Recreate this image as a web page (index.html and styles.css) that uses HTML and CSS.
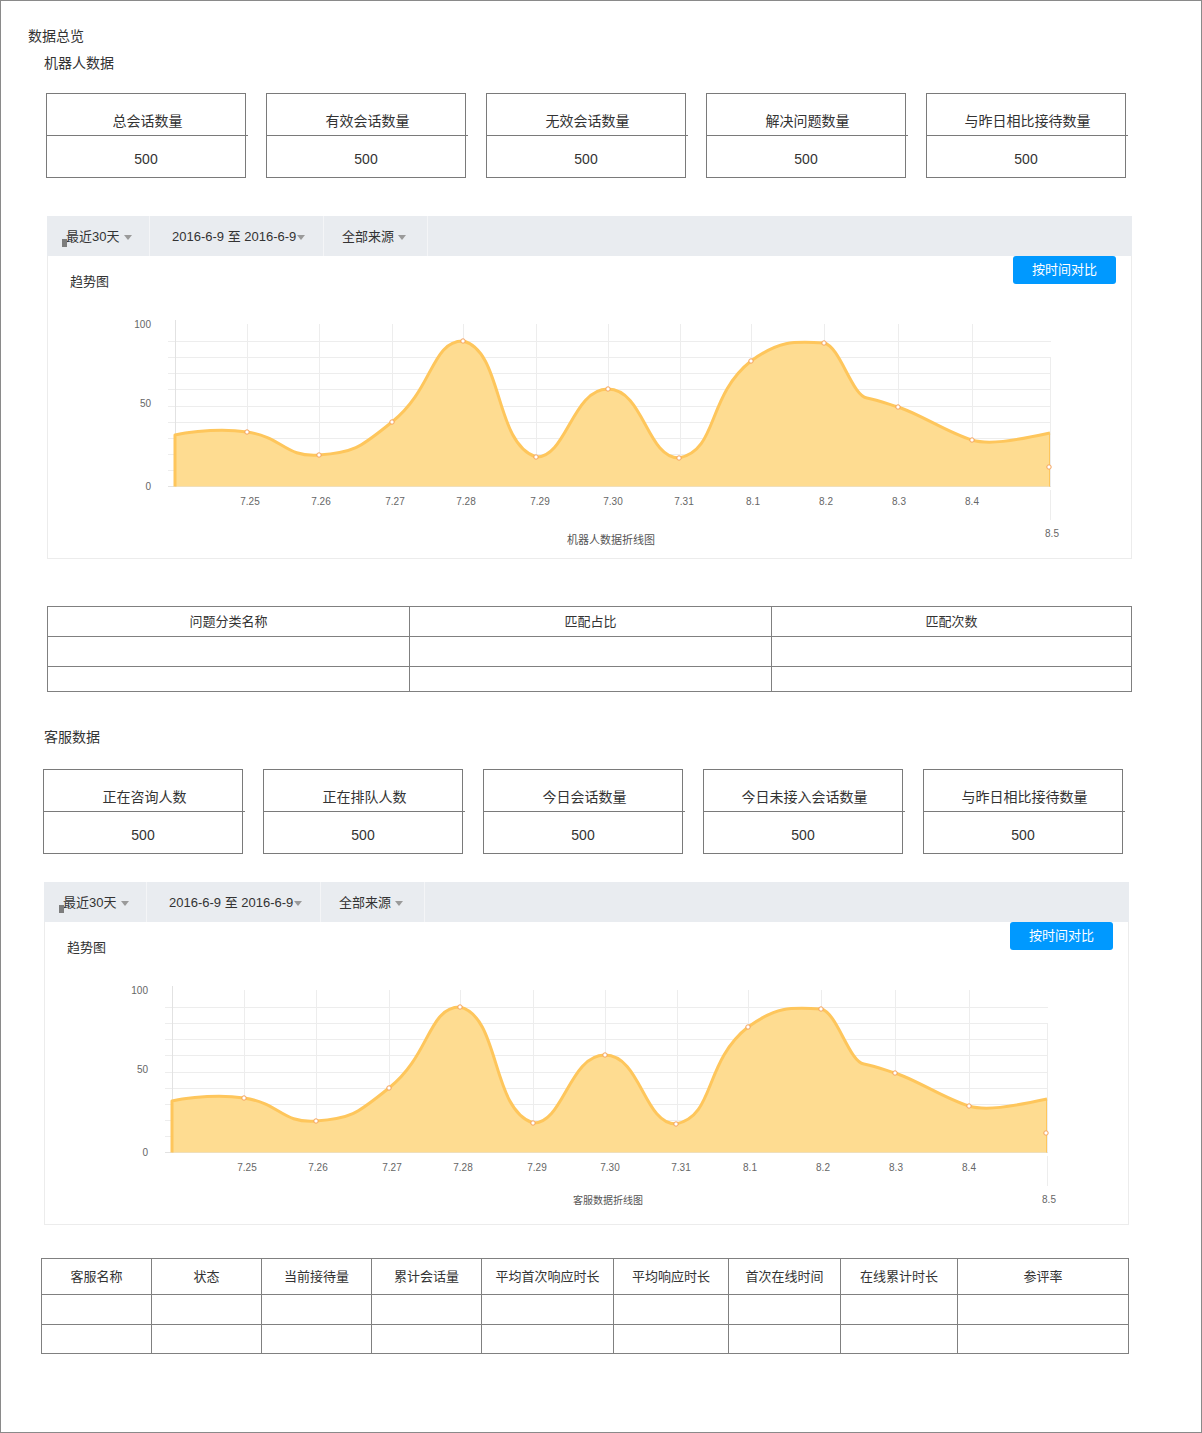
FILE: index.html
```html
<!DOCTYPE html>
<html lang="zh-CN">
<head>
<meta charset="utf-8">
<title>数据总览</title>
<link rel="stylesheet" href="styles.css">
</head>
<body>
<div class="page">
  <h1 class="page-title">数据总览</h1>

  <h2 class="section-title">机器人数据</h2>
  <div class="cards">
    <div class="card"><div class="card-label">总会话数量</div><div class="card-value">500</div></div>
    <div class="card"><div class="card-label">有效会话数量</div><div class="card-value">500</div></div>
    <div class="card"><div class="card-label">无效会话数量</div><div class="card-value">500</div></div>
    <div class="card"><div class="card-label">解决问题数量</div><div class="card-value">500</div></div>
    <div class="card"><div class="card-label">与昨日相比接待数量</div><div class="card-value">500</div></div>
  </div>

  <div class="panel">
    <div class="filter-bar">
      <div class="filter-item filter-item--range"><span class="cursor-mark"></span>最近30天<span class="caret caret--wide"></span></div>
      <div class="filter-item filter-item--date">2016-6-9 至 2016-6-9<span class="caret caret--tight"></span></div>
      <div class="filter-item filter-item--source">全部来源<span class="caret"></span></div>
    </div>
    <div class="panel-head">
      <span class="trend-label">趋势图</span>
      <button class="btn-compare" type="button">按时间对比</button>
    </div>
    <svg class="chart" viewBox="0 0 1083 268" width="1083" height="268">
      <path class="grid" d="M120 51.5H1003M120 67.5H1003M120 83.5H1003M120 99.5H1003M120 116.5H1003M120 132.5H1003M120 148.5H1003M120 164.5H1003M120 180.5H1003"/>
      <path class="grid" d="M199.5 34V197M271.5 34V197M344.5 34V197M415.5 34V197M488.5 34V197M560.5 34V197M632.5 34V197M703.5 34V197M776.5 34V197M850.5 34V197M924.5 34V197M1002.5 67V197M1002.5 200V230"/>
      <path class="axis" d="M127.5 30V197M120 196.5H1003"/>
      <path class="area" d="M127,196.5 L127,145 C127,145 163.9,136.9 199,142 C235.9,147.4 235.8,167.4 271,165 C308.3,162.4 313.3,156.3 344,132 C385.3,99.3 383.3,51 415,51 C455.3,60.8 445.9,153.1 488,167 C518.4,168 524.3,98.8 560,99 C595.8,99.3 598.8,168 631,168 C670.3,160.3 658.3,106.4 703,71 C730.8,51 744.1,51 776,53 C792,56 804,106 819,108 C830,110 840,114 850,117 C872,124 900,143 924,150 C940,155 965,151 1002,143 L1002,196.5 Z"/>
      <path class="line" d="M127,196.5 L127,145 C127,145 163.9,136.9 199,142 C235.9,147.4 235.8,167.4 271,165 C308.3,162.4 313.3,156.3 344,132 C385.3,99.3 383.3,51 415,51 C455.3,60.8 445.9,153.1 488,167 C518.4,168 524.3,98.8 560,99 C595.8,99.3 598.8,168 631,168 C670.3,160.3 658.3,106.4 703,71 C730.8,51 744.1,51 776,53 C792,56 804,106 819,108 C830,110 840,114 850,117 C872,124 900,143 924,150 C940,155 965,151 1002,143"/>
      <path class="line-edge" d="M1001.5 143V196.5"/>
      <g class="dots">
        <circle cx="199" cy="142" r="2.2"/><circle cx="271" cy="165" r="2.2"/><circle cx="344" cy="132" r="2.2"/>
        <circle cx="415" cy="51" r="2.2"/><circle cx="488" cy="167" r="2.2"/><circle cx="560" cy="99" r="2.2"/>
        <circle cx="631" cy="168" r="2.2"/><circle cx="703" cy="71" r="2.2"/><circle cx="776" cy="53" r="2.2"/>
        <circle cx="850" cy="117" r="2.2"/><circle cx="924" cy="150" r="2.2"/><circle cx="1001" cy="177" r="2.2"/>
      </g>
      <g class="ylabels">
        <text x="103" y="38">100</text><text x="103" y="117">50</text><text x="103" y="200">0</text>
      </g>
      <g class="xlabels">
        <text x="202" y="215">7.25</text><text x="273" y="215">7.26</text><text x="347" y="215">7.27</text>
        <text x="418" y="215">7.28</text><text x="492" y="215">7.29</text><text x="565" y="215">7.30</text>
        <text x="636" y="215">7.31</text><text x="705" y="215">8.1</text><text x="778" y="215">8.2</text>
        <text x="851" y="215">8.3</text><text x="924" y="215">8.4</text><text x="1004" y="247">8.5</text>
      </g>
      <text class="caption" x="563" y="254">机器人数据折线图</text>
    </svg>
  </div>

  <table class="data-table data-table--robot">
    <colgroup><col class="c-362"><col class="c-362"><col class="c-360"></colgroup>
    <tr class="row-h30"><th>问题分类名称</th><th>匹配占比</th><th>匹配次数</th></tr>
    <tr class="row-h30"><td></td><td></td><td></td></tr>
    <tr class="row-h25"><td></td><td></td><td></td></tr>
  </table>

  <h2 class="section-title section-title--service">客服数据</h2>
  <div class="cards cards--service">
    <div class="card"><div class="card-label">正在咨询人数</div><div class="card-value">500</div></div>
    <div class="card"><div class="card-label">正在排队人数</div><div class="card-value">500</div></div>
    <div class="card"><div class="card-label">今日会话数量</div><div class="card-value">500</div></div>
    <div class="card"><div class="card-label">今日未接入会话数量</div><div class="card-value">500</div></div>
    <div class="card"><div class="card-label">与昨日相比接待数量</div><div class="card-value">500</div></div>
  </div>

  <div class="panel panel--service">
    <div class="filter-bar">
      <div class="filter-item filter-item--range"><span class="cursor-mark"></span>最近30天<span class="caret caret--wide"></span></div>
      <div class="filter-item filter-item--date">2016-6-9 至 2016-6-9<span class="caret caret--tight"></span></div>
      <div class="filter-item filter-item--source">全部来源<span class="caret"></span></div>
    </div>
    <div class="panel-head">
      <span class="trend-label">趋势图</span>
      <button class="btn-compare" type="button">按时间对比</button>
    </div>
    <svg class="chart" viewBox="0 0 1083 268" width="1083" height="268">
      <path class="grid" d="M120 51.5H1003M120 67.5H1003M120 83.5H1003M120 99.5H1003M120 116.5H1003M120 132.5H1003M120 148.5H1003M120 164.5H1003M120 180.5H1003"/>
      <path class="grid" d="M199.5 34V197M271.5 34V197M344.5 34V197M415.5 34V197M488.5 34V197M560.5 34V197M632.5 34V197M703.5 34V197M776.5 34V197M850.5 34V197M924.5 34V197M1002.5 67V197M1002.5 200V230"/>
      <path class="axis" d="M127.5 30V197M120 196.5H1003"/>
      <path class="area" d="M127,196.5 L127,145 C127,145 163.9,136.9 199,142 C235.9,147.4 235.8,167.4 271,165 C308.3,162.4 313.3,156.3 344,132 C385.3,99.3 383.3,51 415,51 C455.3,60.8 445.9,153.1 488,167 C518.4,168 524.3,98.8 560,99 C595.8,99.3 598.8,168 631,168 C670.3,160.3 658.3,106.4 703,71 C730.8,51 744.1,51 776,53 C792,56 804,106 819,108 C830,110 840,114 850,117 C872,124 900,143 924,150 C940,155 965,151 1002,143 L1002,196.5 Z"/>
      <path class="line" d="M127,196.5 L127,145 C127,145 163.9,136.9 199,142 C235.9,147.4 235.8,167.4 271,165 C308.3,162.4 313.3,156.3 344,132 C385.3,99.3 383.3,51 415,51 C455.3,60.8 445.9,153.1 488,167 C518.4,168 524.3,98.8 560,99 C595.8,99.3 598.8,168 631,168 C670.3,160.3 658.3,106.4 703,71 C730.8,51 744.1,51 776,53 C792,56 804,106 819,108 C830,110 840,114 850,117 C872,124 900,143 924,150 C940,155 965,151 1002,143"/>
      <path class="line-edge" d="M1001.5 143V196.5"/>
      <g class="dots">
        <circle cx="199" cy="142" r="2.2"/><circle cx="271" cy="165" r="2.2"/><circle cx="344" cy="132" r="2.2"/>
        <circle cx="415" cy="51" r="2.2"/><circle cx="488" cy="167" r="2.2"/><circle cx="560" cy="99" r="2.2"/>
        <circle cx="631" cy="168" r="2.2"/><circle cx="703" cy="71" r="2.2"/><circle cx="776" cy="53" r="2.2"/>
        <circle cx="850" cy="117" r="2.2"/><circle cx="924" cy="150" r="2.2"/><circle cx="1001" cy="177" r="2.2"/>
      </g>
      <g class="ylabels">
        <text x="103" y="38">100</text><text x="103" y="117">50</text><text x="103" y="200">0</text>
      </g>
      <g class="xlabels">
        <text x="202" y="215">7.25</text><text x="273" y="215">7.26</text><text x="347" y="215">7.27</text>
        <text x="418" y="215">7.28</text><text x="492" y="215">7.29</text><text x="565" y="215">7.30</text>
        <text x="636" y="215">7.31</text><text x="705" y="215">8.1</text><text x="778" y="215">8.2</text>
        <text x="851" y="215">8.3</text><text x="924" y="215">8.4</text><text x="1004" y="247">8.5</text>
      </g>
      <text class="caption caption--small" x="563" y="248">客服数据折线图</text>
    </svg>
  </div>

  <table class="data-table data-table--service">
    <colgroup>
      <col class="c-110"><col class="c-110"><col class="c-110"><col class="c-110"><col class="c-132">
      <col class="c-115"><col class="c-112"><col class="c-117"><col class="c-171">
    </colgroup>
    <tr class="row-h36"><th>客服名称</th><th>状态</th><th>当前接待量</th><th>累计会话量</th><th>平均首次响应时长</th><th>平均响应时长</th><th>首次在线时间</th><th>在线累计时长</th><th>参评率</th></tr>
    <tr class="row-h30"><td></td><td></td><td></td><td></td><td></td><td></td><td></td><td></td><td></td></tr>
    <tr class="row-h29"><td></td><td></td><td></td><td></td><td></td><td></td><td></td><td></td><td></td></tr>
  </table>
</div>
</body>
</html>
```

FILE: styles.css
```css
* { box-sizing: border-box; }

body {
  margin: 0;
  background: #fff;
  color: #333;
  font-family: "Liberation Sans", "Noto Sans CJK SC", sans-serif;
}

.page {
  width: 1202px;
  height: 1433px;
  border: 1px solid #8a8a8a;
  padding-top: 25px;
}

.page-title {
  margin: 0 0 0 27px;
  font-size: 14px;
  line-height: 20px;
  font-weight: normal;
}

.section-title {
  margin: 7px 0 0 43px;
  font-size: 14px;
  line-height: 20px;
  font-weight: normal;
}
.section-title--service { margin-top: 35px; }

/* stat cards */
.cards {
  display: flex;
  gap: 20px;
  margin: 20px 0 0 45px;
}
.cards--service { margin: 22px 0 0 42px; }

.card {
  width: 200px;
  height: 85px;
  border: 1px solid #7a7a7a;
}
.card-label {
  height: 42px;
  margin-right: -3px;
  padding-top: 17px;
  border-bottom: 1px solid #7a7a7a;
  text-align: center;
  font-size: 14px;
  line-height: 20px;
}
.card-value {
  padding-top: 13px;
  text-align: center;
  font-size: 14px;
  line-height: 20px;
}

/* chart panel */
.panel {
  width: 1085px;
  margin: 38px 0 0 46px;
  border: 1px solid #ececec;
  border-top: 0;
}
.panel--service { margin: 28px 0 0 43px; }

.filter-bar {
  display: flex;
  height: 40px;
  margin: 0 -1px;
  background: #e9ecf0;
}
.filter-item {
  position: relative;
  height: 40px;
  line-height: 42px;
  font-size: 13px;
  color: #333;
  border-right: 1px solid #f4f5f7;
  white-space: nowrap;
}
.filter-item--range { width: 103px; padding-left: 19px; }
.filter-item--date { width: 174px; padding-left: 22px; }
.filter-item--source { width: 104px; padding-left: 18px; }

.cursor-mark {
  position: absolute;
  left: 15px;
  top: 23px;
  width: 5px;
  height: 8px;
  background: #7d7d7d;
}

.caret {
  display: inline-block;
  width: 0;
  height: 0;
  margin-left: 4px;
  vertical-align: middle;
  border-left: 4.5px solid transparent;
  border-right: 4.5px solid transparent;
  border-top: 5px solid #9a9a9a;
}
.caret--wide { margin-left: 5px; }
.caret--tight { margin-left: 1px; }

.panel-head {
  display: flex;
  justify-content: space-between;
  align-items: flex-start;
  height: 34px;
  padding-left: 22px;
}
.trend-label {
  margin-top: 16px;
  font-size: 13px;
  line-height: 20px;
}
.btn-compare {
  width: 103px;
  height: 28px;
  margin-right: 15px;
  padding: 0;
  border: 0;
  border-radius: 3px;
  background: #0099ff;
  color: #fff;
  font-family: inherit;
  font-size: 13px;
  line-height: 28px;
}

.chart {
  display: block;
  width: 1083px;
  height: 268px;
}
.chart .grid { fill: none; stroke: #ededed; stroke-width: 1; }
.chart .axis { fill: none; stroke: #e2e2e2; stroke-width: 1; }
.chart .area { fill: #fedc91; stroke: none; }
.chart .line { fill: none; stroke: #fec65c; stroke-width: 3; stroke-linejoin: round; }
.chart .line-edge { fill: none; stroke: #fec65c; stroke-width: 1; }
.chart .dots circle { fill: #fff; stroke: #f6a25a; stroke-width: 1; }
.chart text {
  font-family: "Liberation Sans", "Noto Sans CJK SC", sans-serif;
  font-size: 10px;
  fill: #666;
}
.chart .ylabels text { text-anchor: end; }
.chart .xlabels text { text-anchor: middle; }
.chart .caption { text-anchor: middle; font-size: 11px; fill: #555; }
.chart .caption--small { font-size: 10px; }

/* tables */
.data-table {
  border-collapse: collapse;
  table-layout: fixed;
  font-size: 13px;
  color: #333;
}
.data-table th,
.data-table td {
  padding: 0;
  border: 1px solid #808080;
  text-align: center;
  font-weight: normal;
}
.data-table th { padding-bottom: 2px; }
.data-table--robot { width: 1084px; margin: 47px 0 0 46px; }
.data-table--service { width: 1087px; margin: 33px 0 0 40px; }

.c-362 { width: 362px; }
.c-360 { width: 360px; }
.c-110 { width: 110px; }
.c-132 { width: 132px; }
.c-115 { width: 115px; }
.c-112 { width: 112px; }
.c-117 { width: 117px; }
.c-171 { width: 171px; }

.row-h36 { height: 36px; }
.row-h30 { height: 30px; }
.row-h29 { height: 29px; }
.row-h25 { height: 25px; }
```
